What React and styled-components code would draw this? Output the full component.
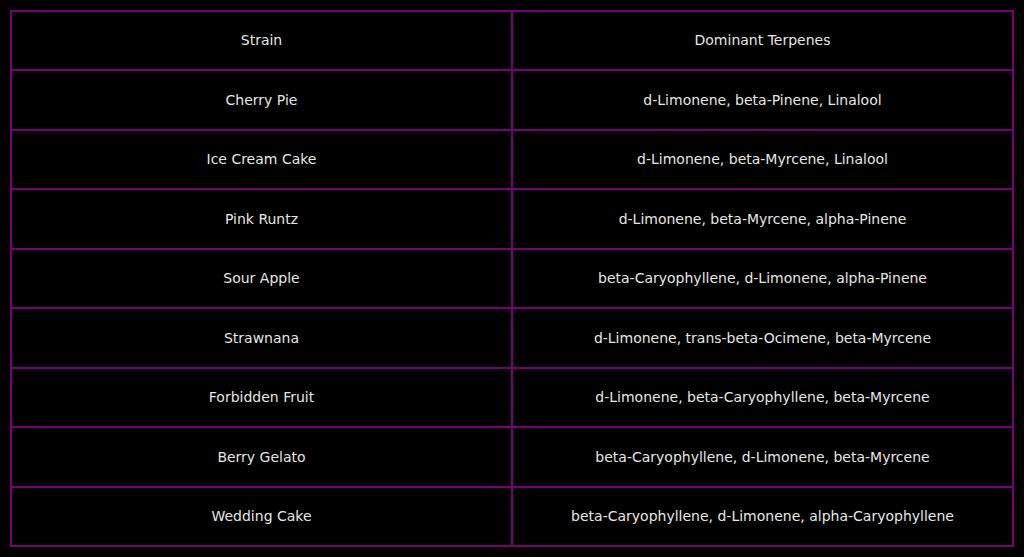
import React from 'react'
import styled, { createGlobalStyle } from 'styled-components';

const GlobalStyle = createGlobalStyle`
    html, body {
        margin:0;
        padding:0;
        background-color:#000;
    }
`;

const Page = styled.div`
    padding:10px;
    background-color:#000;
    min-height:557px;
    box-sizing:border-box;
`;

const Table = styled.div`
    width:1004px;
    display:grid;
    grid-template-columns:499px 499px;
    grid-template-rows:57px 58px 57px 58px 57px 58px 57px 58px 57px;
    gap:2px;
    padding:2px;
    box-sizing:border-box;
    background-color:#7a007a;
    font-family:"DejaVu Sans", Verdana, sans-serif;
    font-size:14px;
    color:#e6e6e6;
`;

const Cell = styled.div`
    background-color:#000;
    display:flex;
    align-items:center;
    justify-content:center;
    text-align:center;
    padding-bottom:1px;
`;

const rows = [
  ['Strain', 'Dominant Terpenes'],
  ['Cherry Pie', 'd-Limonene, beta-Pinene, Linalool'],
  ['Ice Cream Cake', 'd-Limonene, beta-Myrcene, Linalool'],
  ['Pink Runtz', 'd-Limonene, beta-Myrcene, alpha-Pinene'],
  ['Sour Apple', 'beta-Caryophyllene, d-Limonene, alpha-Pinene'],
  ['Strawnana', 'd-Limonene, trans-beta-Ocimene, beta-Myrcene'],
  ['Forbidden Fruit', 'd-Limonene, beta-Caryophyllene, beta-Myrcene'],
  ['Berry Gelato', 'beta-Caryophyllene, d-Limonene, beta-Myrcene'],
  ['Wedding Cake', 'beta-Caryophyllene, d-Limonene, alpha-Caryophyllene'],
];

const App = () => {
  return (
    <Page>
      <GlobalStyle/>
      <Table role="table">
        {rows.map(([strain, terps]) => (
          <React.Fragment key={strain}>
            <Cell>{strain}</Cell>
            <Cell>{terps}</Cell>
          </React.Fragment>
        ))}
      </Table>
    </Page>
  )
}

export default App
